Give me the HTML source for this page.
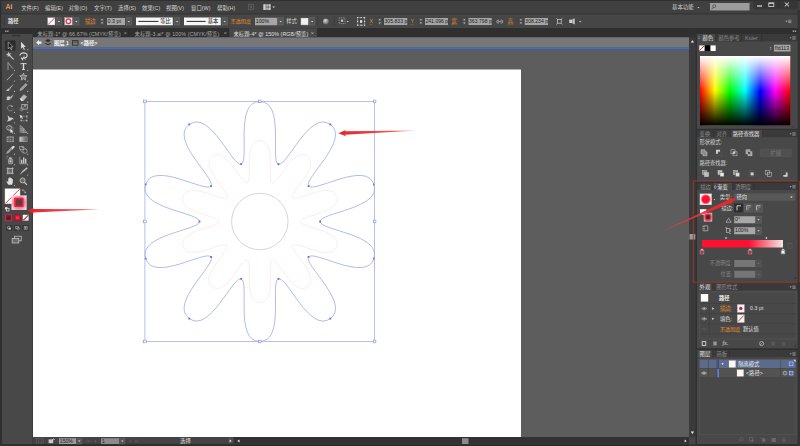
<!DOCTYPE html>
<html lang="zh-CN"><head><meta charset="utf-8"><title>Ai</title>
<style>
html,body{margin:0;padding:0;width:800px;height:446px;overflow:hidden;background:#303030;}
#w{position:absolute;left:0;top:0;width:3200px;height:1784px;transform:scale(0.25);transform-origin:0 0;overflow:hidden;background:#303030;font-family:'Liberation Sans','Noto Sans CJK SC',sans-serif;}
#w div,#w span{position:absolute;box-sizing:border-box;}
#w span{white-space:nowrap;line-height:1;}
#w svg{position:absolute;left:0;top:0;}
u{text-decoration:none;border-bottom:1.6px solid currentColor;}
</style></head><body><div id="w">
<div style="left:0px;top:0px;width:3200px;height:54.4px;background:#404040;"></div>
<div style="left:0px;top:0px;width:3200px;height:2.8px;background:#2b2b2b;"></div>
<div style="left:0px;top:54px;width:3200px;height:4px;background:#383838;"></div>
<div style="left:0px;top:57.6px;width:3200px;height:54.4px;background:#464646;"></div>
<div style="left:0px;top:0px;width:4.8px;height:112px;background:#2e2e2e;"></div>
<div style="left:132px;top:112px;width:2624px;height:36.8px;background:#2f2f2f;"></div>
<div style="left:132px;top:148.8px;width:2624px;height:42px;background:#777777;"></div>
<div style="left:132px;top:190.4px;width:2624px;height:8.8px;background:#4a6cb8;"></div>
<div style="left:132px;top:199.2px;width:2624px;height:1548.8px;background:#5d5d5d;"></div>
<div style="left:132px;top:277.6px;width:1952px;height:1470.4px;background:#ffffff;"></div>
<div style="left:132px;top:1748px;width:2624px;height:36px;background:#323232;"></div>
<div style="left:132px;top:1748px;width:777.6px;height:28px;background:#444444;"></div>
<div style="left:909.6px;top:1748px;width:25.6px;height:28px;background:#4c4c4c;"></div>
<div style="left:132px;top:1774.4px;width:2624px;height:9.6px;background:linear-gradient(#3a3a3a,#262626);"></div>
<div style="left:1848px;top:1753.2px;width:26.4px;height:22.4px;background:#8c8c8c;"></div>
<div style="left:2756px;top:148.8px;width:26.4px;height:1600px;background:#3a3a3a;"></div>
<div style="left:2756px;top:1748px;width:26.4px;height:30px;background:#464646;"></div>
<div style="left:2758.4px;top:936px;width:22.4px;height:22.4px;background:#9a9a9a;"></div>
<div style="left:8px;top:114.4px;width:121.6px;height:21.6px;background:#2f2f2f;"></div>
<div style="left:8px;top:136px;width:121.6px;height:1640px;background:#484848;"></div>
<div style="left:48px;top:140.8px;width:34px;height:4.4px;background:#2a2a2a;"></div>
<div style="left:2788px;top:114.4px;width:412px;height:21.6px;background:#2f2f2f;"></div>
<div style="left:2788px;top:136px;width:412px;height:379.2px;background:#484848;"></div>
<div style="left:2788px;top:136px;width:412px;height:30.4px;background:#3a3a3a;"></div>
<div style="left:2788px;top:136px;width:74.4px;height:31.2px;background:#484848;"></div>
<div style="left:2788px;top:520px;width:412px;height:206.4px;background:#484848;"></div>
<div style="left:2788px;top:520px;width:412px;height:28.8px;background:#3a3a3a;"></div>
<div style="left:2924px;top:520px;width:126px;height:29.6px;background:#484848;"></div>
<div style="left:2788px;top:732px;width:412px;height:396px;background:#484848;"></div>
<div style="left:2788px;top:732px;width:412px;height:28px;background:#3a3a3a;"></div>
<div style="left:2852px;top:732px;width:78px;height:28.8px;background:#484848;"></div>
<div style="left:2788px;top:1133.6px;width:412px;height:259.2px;background:#484848;"></div>
<div style="left:2788px;top:1133.6px;width:412px;height:28px;background:#3a3a3a;"></div>
<div style="left:2788px;top:1133.6px;width:62px;height:28.8px;background:#484848;"></div>
<div style="left:2788px;top:1400px;width:412px;height:376px;background:#484848;"></div>
<div style="left:2788px;top:1400px;width:412px;height:28.8px;background:#3a3a3a;"></div>
<div style="left:2788px;top:1400px;width:62px;height:29.6px;background:#484848;"></div>
<span style="left:22.4px;top:9.6px;font-size:32.4px;color:#d6d6d6;transform:scaleX(0.86);transform-origin:0 0;"><b style="color:#dc8f58">A</b><b style="color:#c9b3a1">i</b></span>
<span style="left:84.8px;top:19.6px;font-size:21.6px;color:#d4d4d4;">文件(F)</span>
<span style="left:180px;top:19.6px;font-size:21.6px;color:#d4d4d4;">编辑(E)</span>
<span style="left:274.4px;top:19.6px;font-size:21.6px;color:#d4d4d4;">对象(O)</span>
<span style="left:376px;top:19.6px;font-size:21.6px;color:#d4d4d4;">文字(T)</span>
<span style="left:472px;top:19.6px;font-size:21.6px;color:#d4d4d4;">选择(S)</span>
<span style="left:568px;top:19.6px;font-size:21.6px;color:#d4d4d4;">效果(C)</span>
<span style="left:664px;top:19.6px;font-size:21.6px;color:#d4d4d4;">视图(V)</span>
<span style="left:764px;top:19.6px;font-size:21.6px;color:#d4d4d4;">窗口(W)</span>
<span style="left:868px;top:19.6px;font-size:21.6px;color:#d4d4d4;">帮助(H)</span>
<span style="left:2688px;top:17.6px;font-size:21.6px;color:#cfcfcf;">基本功能</span>
<div style="left:2840px;top:12px;width:158px;height:30.4px;background:#9c9c9c;border-radius:1px;"></div>
<div style="left:3012px;top:2.8px;width:180px;height:34.4px;background:#363636;border-radius:0 0 8px 8px;"></div>
<span style="left:31.6px;top:74.4px;font-size:21.2px;color:#e2e2e2;"><b>路径</b></span>
<span style="left:340px;top:74px;font-size:21.2px;color:#e08a2c;"><u>描边</u></span>
<div style="left:427.6px;top:71.6px;width:72.8px;height:28.8px;background:#a6a6a6;"></div>
<span style="left:430.4px;top:75.6px;font-size:20.8px;color:#1c1c1c;letter-spacing:0.3px;">0.3 pt</span>
<div style="left:544px;top:70.4px;width:147.2px;height:30.4px;background:#f6f6f6;"></div>
<span style="left:640.8px;top:75.2px;font-size:21.2px;color:#111;">等比</span>
<div style="left:736.4px;top:70.4px;width:146.4px;height:30.4px;background:#f6f6f6;"></div>
<span style="left:831.2px;top:75.2px;font-size:21.2px;color:#111;">基本</span>
<span style="left:922.4px;top:74px;font-size:20.4px;color:#e08a2c;"><u>不透明度</u></span>
<div style="left:1020px;top:71.2px;width:88.8px;height:29.6px;background:#a6a6a6;"></div>
<span style="left:1023.2px;top:76px;font-size:20.8px;color:#1c1c1c;">100%</span>
<span style="left:1144.8px;top:74.4px;font-size:21.2px;color:#dadada;">样式:</span>
<span style="left:1477.6px;top:74.8px;font-size:20.8px;color:#e08a2c;"><u>X</u></span>
<div style="left:1536px;top:71.6px;width:92.8px;height:28.8px;background:#a6a6a6;"></div>
<span style="left:1538px;top:76px;font-size:20px;color:#1c1c1c;letter-spacing:0.25px;">305.833 p</span>
<span style="left:1642.4px;top:74.8px;font-size:20.8px;color:#e08a2c;"><u>Y</u></span>
<div style="left:1699.6px;top:71.6px;width:92.8px;height:28.8px;background:#a6a6a6;"></div>
<span style="left:1701.6px;top:76px;font-size:20px;color:#1c1c1c;letter-spacing:0.25px;">241.096 p</span>
<span style="left:1804.8px;top:73.6px;font-size:22.4px;color:#e08a2c;"><u>宽</u></span>
<div style="left:1874px;top:71.6px;width:92.8px;height:28.8px;background:#a6a6a6;"></div>
<span style="left:1876px;top:76px;font-size:20px;color:#1c1c1c;letter-spacing:0.25px;">363.798 p</span>
<span style="left:2030.4px;top:73.6px;font-size:22.4px;color:#e08a2c;"><u>高</u></span>
<div style="left:2099.2px;top:71.6px;width:92.8px;height:28.8px;background:#a6a6a6;"></div>
<span style="left:2101.2px;top:76px;font-size:20px;color:#1c1c1c;letter-spacing:0.25px;">308.234 p</span>
<div style="left:916px;top:112.8px;width:352px;height:36px;background:#484848;"></div>
<span style="left:149.2px;top:124.8px;font-size:21.2px;color:#a8a8a8;letter-spacing:0.34px;">未标题-1* @ 66.67% (CMYK/预览)</span>
<span style="left:538.4px;top:124.8px;font-size:21.2px;color:#a8a8a8;letter-spacing:0.34px;">未标题-3.ai* @ 100% (CMYK/预览)</span>
<span style="left:933.6px;top:124.8px;font-size:21.2px;color:#e0e0e0;letter-spacing:0.34px;">未标题-4* @ 150% (RGB/预览)</span>
<span style="left:216px;top:159.6px;font-size:21.2px;color:#f4f4f4;"><b>图层 1</b></span>
<span style="left:322.4px;top:159.6px;font-size:21.2px;color:#f4f4f4;"><b>&lt;路径&gt;</b></span>
<div style="left:236px;top:1752.8px;width:68px;height:23.2px;background:#9a9a9a;"></div>
<span style="left:239.2px;top:1754.4px;font-size:20.4px;color:#1c1c1c;">150%</span>
<div style="left:404px;top:1752.8px;width:72px;height:23.2px;background:#8c8c8c;"></div>
<span style="left:408px;top:1754.4px;font-size:20.4px;color:#2a2a2a;">1</span>
<span style="left:720px;top:1753.2px;font-size:21.6px;color:#e0e0e0;">选择</span>
<span style="left:2810.4px;top:140.8px;font-size:21.2px;color:#e4e4e4;">颜色</span>
<span style="left:2873.6px;top:140.8px;font-size:21.2px;color:#8e8e8e;">颜色参考</span>
<span style="left:2980px;top:140.8px;font-size:21.2px;color:#8e8e8e;letter-spacing:0.5px;">Kuler</span>
<div style="left:3096px;top:179.2px;width:65.6px;height:26.4px;background:#a8a8a8;"></div>
<span style="left:3099.2px;top:182.4px;font-size:20.8px;color:#222;letter-spacing:0.2px;">ffd113</span>
<div style="left:2800px;top:223.6px;width:360.8px;height:278.4px;background:linear-gradient(to bottom,rgba(255,255,255,1) 0%,rgba(255,255,255,0) 50%,rgba(0,0,0,0) 50%,rgba(0,0,0,1) 100%),linear-gradient(to right,#ff0000 0%,#ffff00 16.7%,#00ff00 33.3%,#00ffff 50%,#0000ff 66.7%,#ff00ff 83.3%,#ff0000 100%);"></div>
<div style="left:2800px;top:499.6px;width:360.8px;height:2.8px;background:#000;"></div>
<span style="left:2798.4px;top:525.2px;font-size:21.2px;color:#8e8e8e;">变换</span>
<span style="left:2865.6px;top:525.2px;font-size:21.2px;color:#8e8e8e;">对齐</span>
<span style="left:2931.2px;top:525.2px;font-size:21.2px;color:#e4e4e4;">路径查找器</span>
<span style="left:2797.6px;top:559.2px;font-size:21.2px;color:#d8d8d8;">形状模式:</span>
<div style="left:3040.8px;top:596px;width:124.8px;height:31.2px;background:#505050;border:2.0px solid #5c5c5c;border-radius:3.2px;"></div>
<span style="left:3081.6px;top:600.8px;font-size:21.2px;color:#7e7e7e;">扩展</span>
<span style="left:2797.6px;top:641.6px;font-size:21.2px;color:#d8d8d8;">路径查找器:</span>
<span style="left:2800.8px;top:736.8px;font-size:21.2px;color:#8e8e8e;">描边</span>
<span style="left:2868.8px;top:736.8px;font-size:21.2px;color:#e4e4e4;">渐变</span>
<span style="left:2940.8px;top:736.8px;font-size:21.2px;color:#8e8e8e;">透明度</span>
<span style="left:2879.2px;top:778.4px;font-size:21.2px;color:#d8d8d8;">类型:</span>
<div style="left:2936.8px;top:774.8px;width:242.4px;height:26px;background:#585858;border:1.6px solid #6a6a6a;"></div>
<span style="left:2945.6px;top:778px;font-size:21.2px;color:#e8e8e8;">径向</span>
<span style="left:2884.8px;top:822.4px;font-size:21.2px;color:#d8d8d8;">描边:</span>
<div style="left:2936.8px;top:864.8px;width:84px;height:28px;background:#a8a8a8;"></div>
<span style="left:2940px;top:868px;font-size:20.8px;color:#222;">0°</span>
<div style="left:2936.8px;top:908.8px;width:84px;height:28px;background:#a8a8a8;"></div>
<span style="left:2940px;top:912px;font-size:20.8px;color:#222;">100%</span>
<div style="left:2808px;top:960px;width:324px;height:30.4px;background:linear-gradient(to right,#ff1030 0%,#ff1030 58%,#f6d6da 97%,#f0e4e6 100%);"></div>
<span style="left:2838.4px;top:1043.2px;font-size:21.2px;color:#858585;">不透明度:</span>
<div style="left:2936.8px;top:1040px;width:84px;height:28px;background:#767676;"></div>
<span style="left:2881.6px;top:1086.4px;font-size:21.2px;color:#858585;">位置:</span>
<div style="left:2936.8px;top:1083.2px;width:84px;height:28px;background:#767676;"></div>
<span style="left:2798.4px;top:1138.4px;font-size:21.2px;color:#e4e4e4;">外观</span>
<span style="left:2864.8px;top:1138.4px;font-size:21.2px;color:#8e8e8e;">图形样式</span>
<span style="left:2876px;top:1181.6px;font-size:21.2px;color:#f0f0f0;"><b>路径</b></span>
<span style="left:2880px;top:1223.2px;font-size:21.2px;color:#e08a2c;"><u>描边:</u></span>
<span style="left:3000px;top:1224px;font-size:20.4px;color:#e0e0e0;letter-spacing:0.55px;">0.3 pt</span>
<span style="left:2880px;top:1264px;font-size:21.2px;color:#e4e4e4;">填色:</span>
<span style="left:2880px;top:1304.8px;font-size:20.4px;color:#e08a2c;"><u>不透明度</u></span>
<span style="left:2972px;top:1304.8px;font-size:21.2px;color:#e4e4e4;">默认值</span>
<span style="left:2890.4px;top:1360.8px;font-size:22.4px;color:#e0e0e0;font-family:'Liberation Serif',serif;"><i>fx</i>.</span>
<span style="left:2798.4px;top:1405.6px;font-size:21.2px;color:#e4e4e4;">图层</span>
<span style="left:2865.6px;top:1405.6px;font-size:21.2px;color:#8e8e8e;">画板</span>
<div style="left:2798.4px;top:1438.4px;width:384.8px;height:35.2px;background:#5c6b8c;"></div>
<div style="left:2798.4px;top:1474.4px;width:384.8px;height:36px;background:#535353;"></div>
<span style="left:2952.8px;top:1444px;font-size:21.2px;color:#f0f0f0;">隔离模式</span>
<span style="left:2984px;top:1480.4px;font-size:21.2px;color:#e8e8e8;">&lt;路径&gt;</span>
<svg width="3200" height="1784" viewBox="0 0 800 446">
<rect x="248.7" y="4.2" width="4.8" height="5.6" fill="#444" stroke="#6a6a6a" stroke-width="0.6" />
<path d="M250.4 5.6l1.8 1.4l-1.8 1.4z" fill="#6a6a6a" />
<rect x="263.3" y="4.2" width="7.4" height="5.8" fill="#cfcfcf" />
<path d="M266 4.2v5.8M268.1 4.2v5.8M266 7.1h4.7" fill="none" stroke="#404040" stroke-width="0.6" />
<path d="M272.4 6.45h2.6l-1.3 1.5z" fill="#d8d8d8" />
<path d="M697.4 6.95h2.2l-1.1 1.3z" fill="#cfcfcf" />
<circle cx="714.2" cy="6.2" r="1.5" fill="none" stroke="#3c3c3c" stroke-width="0.6" />
<path d="M713.1 7.4l-1.4 1.8" fill="none" stroke="#3c3c3c" stroke-width="0.7" />
<path d="M765.2 1v8M779 1v8" fill="none" stroke="#2a2a2a" stroke-width="0.5" />
<rect x="757" y="5.4" width="5" height="1.2" fill="#dcdcdc" />
<rect x="768.8" y="3" width="5" height="3.4" fill="none" stroke="#dcdcdc" stroke-width="0.8" />
<path d="M768.8 3.2h5" fill="none" stroke="#dcdcdc" stroke-width="1" />
<path d="M784.8 2.5l4.2 3.9M789 2.5l-4.2 3.9" fill="none" stroke="#e0e0e0" stroke-width="1" />
<path d="M4.2 16.6v9" fill="none" stroke="#2a2a2a" stroke-width="0.9" stroke-dasharray="0.9 0.5"/>
<rect x="47.6" y="17.6" width="7.4" height="7.4" fill="#ffffff" stroke="#888" stroke-width="0.4" />
<path d="M48 24.6l6.6-6.6" fill="none" stroke="#e02020" stroke-width="0.9" />
<rect x="56.2" y="17.8" width="5.4" height="7.2" fill="#555555" stroke="#6e6e6e" stroke-width="0.5" />
<path d="M57.7 20.9h2.4l-1.2 1.4z" fill="#e4e4e4" />
<rect x="64.6" y="17.6" width="7.6" height="7.4" fill="#f2e6e8" stroke="#999" stroke-width="0.4" />
<circle cx="68.4" cy="21.3" r="2.3" fill="none" stroke="#e03858" stroke-width="1.3" />
<rect x="67.5" y="20.4" width="1.8" height="1.8" fill="#ffffff" />
<rect x="73.6" y="17.8" width="5.4" height="7.2" fill="#555555" stroke="#6e6e6e" stroke-width="0.5" />
<path d="M75.1 20.9h2.4l-1.2 1.4z" fill="#e4e4e4" />
<rect x="99.6" y="17.8" width="5" height="7.2" fill="#505050" stroke="#3a3a3a" stroke-width="0.4" />
<path d="M101 20.35h2.2l-1.1 -1.3z" fill="#dcdcdc" />
<path d="M101 22.45h2.2l-1.1 1.3z" fill="#dcdcdc" />
<path d="M99.6 21.400000000000002h5" fill="none" stroke="#3a3a3a" stroke-width="0.4" />
<rect x="126.2" y="17.8" width="5.4" height="7.2" fill="#555555" stroke="#6e6e6e" stroke-width="0.5" />
<path d="M127.7 20.9h2.4l-1.2 1.4z" fill="#e4e4e4" />
<path d="M138.4 21.4h20" fill="none" stroke="#111" stroke-width="0.9" />
<rect x="174.4" y="17.8" width="5.4" height="7.2" fill="#555555" stroke="#6e6e6e" stroke-width="0.5" />
<path d="M175.9 20.9h2.4l-1.2 1.4z" fill="#e4e4e4" />
<path d="M186.6 21.4h19" fill="none" stroke="#111" stroke-width="0.9" />
<rect x="222" y="17.8" width="5.4" height="7.2" fill="#555555" stroke="#6e6e6e" stroke-width="0.5" />
<path d="M223.5 20.9h2.4l-1.2 1.4z" fill="#e4e4e4" />
<rect x="278" y="17.8" width="5.4" height="7.2" fill="#555555" stroke="#6e6e6e" stroke-width="0.5" />
<path d="M279.5 20.9h2.4l-1.2 1.4z" fill="#e4e4e4" />
<rect x="300.9" y="18" width="7.3" height="7" fill="#f0f0f0" stroke="#8a8a8a" stroke-width="0.4" />
<rect x="309.4" y="17.8" width="5.4" height="7.2" fill="#555555" stroke="#6e6e6e" stroke-width="0.5" />
<path d="M310.9 20.9h2.4l-1.2 1.4z" fill="#e4e4e4" />
<path d="M317.6 16v10M334.4 16v10" fill="none" stroke="#383838" stroke-width="0.6" />
<defs><radialGradient id="gl" cx="0.4" cy="0.35" r="0.7"><stop offset="0" stop-color="#d8d8d8"/><stop offset="0.6" stop-color="#8c8c8c"/><stop offset="1" stop-color="#555"/></radialGradient></defs>
<circle cx="325.9" cy="21.5" r="3" fill="url(#gl)" />
<rect x="339.2" y="17.8" width="5.8" height="5.8" fill="none" stroke="#c8c8c8" stroke-width="0.6" stroke-dasharray="1 0.8"/>
<rect x="341" y="19.6" width="2.2" height="2.2" fill="#c8c8c8" />
<path d="M346.5 20.9h2.4l-1.2 1.4z" fill="#d8d8d8" />
<rect x="357.6" y="17.6" width="7" height="7.6" fill="none" stroke="#cfcfcf" stroke-width="0.7" stroke-dasharray="1.1 0.7"/>
<rect x="360" y="20.2" width="2.2" height="2.6" fill="#e8e8e8" />
<rect x="357" y="17" width="1.2" height="1.2" fill="#d8d8d8" />
<rect x="357" y="20.8" width="1.2" height="1.2" fill="#d8d8d8" />
<rect x="357" y="24.6" width="1.2" height="1.2" fill="#d8d8d8" />
<rect x="360.5" y="17" width="1.2" height="1.2" fill="#d8d8d8" />
<rect x="360.5" y="20.8" width="1.2" height="1.2" fill="#d8d8d8" />
<rect x="360.5" y="24.6" width="1.2" height="1.2" fill="#d8d8d8" />
<rect x="364" y="17" width="1.2" height="1.2" fill="#d8d8d8" />
<rect x="364" y="20.8" width="1.2" height="1.2" fill="#d8d8d8" />
<rect x="364" y="24.6" width="1.2" height="1.2" fill="#d8d8d8" />
<rect x="377.2" y="17.8" width="5" height="7.2" fill="#505050" stroke="#3a3a3a" stroke-width="0.4" />
<path d="M378.6 20.35h2.2l-1.1 -1.3z" fill="#dcdcdc" />
<path d="M378.6 22.45h2.2l-1.1 1.3z" fill="#dcdcdc" />
<path d="M377.2 21.400000000000002h5" fill="none" stroke="#3a3a3a" stroke-width="0.4" />
<rect x="418.4" y="17.8" width="5" height="7.2" fill="#505050" stroke="#3a3a3a" stroke-width="0.4" />
<path d="M419.8 20.35h2.2l-1.1 -1.3z" fill="#dcdcdc" />
<path d="M419.8 22.45h2.2l-1.1 1.3z" fill="#dcdcdc" />
<path d="M418.4 21.400000000000002h5" fill="none" stroke="#3a3a3a" stroke-width="0.4" />
<rect x="461.8" y="17.8" width="5" height="7.2" fill="#505050" stroke="#3a3a3a" stroke-width="0.4" />
<path d="M463.2 20.35h2.2l-1.1 -1.3z" fill="#dcdcdc" />
<path d="M463.2 22.45h2.2l-1.1 1.3z" fill="#dcdcdc" />
<path d="M461.8 21.400000000000002h5" fill="none" stroke="#3a3a3a" stroke-width="0.4" />
<path d="M498.2 21.6h3.2" fill="none" stroke="#cfcfcf" stroke-width="0.7" />
<path d="M499 20.2h-0.8a1.4 1.4 0 0 0 0 2.8h0.8M500.6 20.2h0.8a1.4 1.4 0 0 1 0 2.8h-0.8" fill="none" stroke="#cfcfcf" stroke-width="0.7" />
<rect x="518.4" y="17.8" width="5" height="7.2" fill="#505050" stroke="#3a3a3a" stroke-width="0.4" />
<path d="M519.8 20.35h2.2l-1.1 -1.3z" fill="#dcdcdc" />
<path d="M519.8 22.45h2.2l-1.1 1.3z" fill="#dcdcdc" />
<path d="M518.4 21.400000000000002h5" fill="none" stroke="#3a3a3a" stroke-width="0.4" />
<rect x="557.6" y="19.4" width="3.6" height="3.8" fill="none" stroke="#d0d0d0" stroke-width="0.7" />
<path d="M556.3 18.3l1.3 1.1M562.5 18.3l-1.3 1.1M556.3 24.4l1.3-1.2M562.5 24.4l-1.3-1.2" fill="none" stroke="#d0d0d0" stroke-width="0.7" />
<rect x="569.2" y="19.6" width="3.2" height="3.4" fill="#cfcfcf" />
<path d="M572.4 19.2l2.4-1v6.4l-2.4-1z" fill="#bdbdbd" />
<path d="M579 20.9h2.4l-1.2 1.4z" fill="#d8d8d8" />
<path d="M785.3 20.75h2.2l-1.1 1.3z" fill="#cfcfcf" />
<path d="M788.2 20.2h3.2M788.2 21.4h3.2M788.2 22.6h3.2" fill="none" stroke="#cfcfcf" stroke-width="0.5" />
<path d="M124.4 32.2l2 2M126.4 32.2l-2 2" fill="none" stroke="#b0b0b0" stroke-width="0.6" />
<path d="M224.4 32.2l2 2M226.4 32.2l-2 2" fill="none" stroke="#b0b0b0" stroke-width="0.6" />
<path d="M311.4 32.2l2 2M313.4 32.2l-2 2" fill="none" stroke="#c8c8c8" stroke-width="0.6" />
<path d="M128.8 29v8M228.8 29v8" fill="none" stroke="#262626" stroke-width="0.5" />
<path d="M36.2 42.6l2.8-2.6v1.5h2.4v2.2h-2.4v1.5z" fill="#f2f2f2" />
<path d="M45.2 40.6l2.8-1.6l2.8 1.6l-2.8 1.6z" fill="#2c2c2c" />
<path d="M45.2 43.2l2.8 1.6l2.8-1.6" fill="none" stroke="#2c2c2c" stroke-width="1" />
<path d="M54 45.8h14" fill="none" stroke="#e8e8e8" stroke-width="0.4" />
<rect x="72.4" y="40.6" width="5.6" height="4.6" fill="none" stroke="#2e2e2e" stroke-width="0.8" />
<path d="M72.4 42h5.6" fill="none" stroke="#2e2e2e" stroke-width="0.6" />
<rect x="36.4" y="438.6" width="7" height="4.4" fill="none" stroke="#5e5e5e" stroke-width="0.6" />
<path d="M38.6 438.6v4.4M41.2 438.6v4.4" fill="none" stroke="#5e5e5e" stroke-width="0.5" />
<rect x="48.6" y="439.4" width="4.6" height="3.8" fill="#c8c8c8" />
<path d="M51 440.8l2.6-2.2v1h1.4" fill="none" stroke="#c8c8c8" stroke-width="0.7" />
<rect x="76.6" y="438.2" width="5.4" height="5.8" fill="#555" stroke="#6a6a6a" stroke-width="0.4" />
<path d="M78.1 440.6h2.4l-1.2 1.4z" fill="#dcdcdc" />
<path d="M87 439.4v3.6" fill="none" stroke="#5e5e5e" stroke-width="0.6" />
<path d="M89.5 439.7v3l-1.8 -1.5z" fill="#5e5e5e" />
<path d="M96.1 439.7v3l-1.8 -1.5z" fill="#5e5e5e" />
<rect x="119.6" y="438.2" width="5.4" height="5.8" fill="#555" stroke="#6a6a6a" stroke-width="0.4" />
<path d="M121.1 440.6h2.4l-1.2 1.4z" fill="#dcdcdc" />
<path d="M129.7 439.7v3l1.8 -1.5z" fill="#5e5e5e" />
<path d="M135.5 439.7v3l1.8 -1.5z" fill="#5e5e5e" />
<path d="M138 439.4v3.6" fill="none" stroke="#5e5e5e" stroke-width="0.6" />
<path d="M229.6 439.4v3l2 -1.5z" fill="#e8e8e8" />
<path d="M239.5 439.4v3l-2.2 -1.5z" fill="#e8e8e8" />
<path d="M6.3 30.1v2.2l-1.4 -1.1z" fill="#c8c8c8" />
<path d="M8.3 30.1v2.2l-1.4 -1.1z" fill="#c8c8c8" />
<rect x="5.2" y="40.8" width="10" height="9.6" fill="#2c2c2c" stroke="#262626" stroke-width="0.4" rx="0.6"/>
<path d="M8.2 41.8v7l1.7-1.5l1.2 2.6l1-0.5l-1.2-2.5h2.2z" fill="#1a1a1a" stroke="#c8c8c8" stroke-width="0.6" />
<path d="M21.0 41.8v7l1.7-1.5l1.2 2.6l1-0.5l-1.2-2.5h2.2z" fill="#d8d8d8" />
<path d="M28.2 48.8v1.4h-1.4z" fill="#c8c8c8" />
<path d="M9.399999999999999 55.24999999999999l4.2 4.2" fill="none" stroke="#c6c6c6" stroke-width="1.1" />
<path d="M8.6 51.64999999999999l0.7 1.9l2-0.4l-1.4 1.5l1.2 1.7l-2-0.6l-1.3 1.6l-0.1-2.1l-1.9-0.8l1.9-0.7z" fill="#c6c6c6" />
<path d="M20.0 55.449999999999996a3.6 2.5 0 1 1 3.2 2.4l-0.6 1.8l-1.4-2" fill="none" stroke="#dadada" stroke-width="1.1" />
<path d="M24.0 55.449999999999996v3.6l1-0.8l0.8 1.6" fill="none" stroke="#c6c6c6" stroke-width="0.7" />
<path d="M7.999999999999999 62.5l5 6.2M7.999999999999999 62.5v7.4" fill="none" stroke="#bdbdbd" stroke-width="0.7" />
<path d="M15 69.7v1.4h-1.4z" fill="#c8c8c8" />
<path d="M20.599999999999998 62.9h5.8v1.5h-0.6l-0.3-0.7h-1.3v5.4l0.8 0.3v0.5h-3v-0.5l0.8-0.3v-5.4h-1.3l-0.3 0.7h-0.6z" fill="#dcdcdc" />
<path d="M28.2 69.7v1.4h-1.4z" fill="#c8c8c8" />
<path d="M6.799999999999999 80.15l6.6-6.6" fill="none" stroke="#c6c6c6" stroke-width="0.8" />
<path d="M15 80.15v1.4h-1.4z" fill="#c8c8c8" />
<path d="M23.4 73.05L24.4 75.57L27.11 75.74L25.02 77.48L25.69 80.11L23.4 78.65L21.11 80.11L21.78 77.48L19.69 75.74L22.4 75.57z" fill="#777" stroke="#c6c6c6" stroke-width="0.7" />
<path d="M28.2 80.15v1.4h-1.4z" fill="#c8c8c8" />
<path d="M13.799999999999999 83.39999999999999l-4.6 4.8l0.9 0.9z" fill="#c6c6c6" />
<path d="M8.799999999999999 88.39999999999999c-1.6 0-1.2 2-3 2.4c1.6 0.6 4 0.2 3.9-1.6z" fill="#c6c6c6" />
<path d="M15 90.6v1.4h-1.4z" fill="#c8c8c8" />
<path d="M25.799999999999997 83.39999999999999l1.4 1.4l-5.2 5.2l-2 0.6l0.6-2z" fill="#9a9a9a" stroke="#c6c6c6" stroke-width="0.5" />
<path d="M28.2 90.6v1.4h-1.4z" fill="#c8c8c8" />
<path d="M13.799999999999999 94.25l-3.6 3l1 1.2z" fill="#c6c6c6" />
<path d="M6.6 97.05000000000001c2-1.6 4-0.6 4.2 0.8c0.2 1.6-2 2.8-4.4 2.2c0.8-0.8 0.6-2 0.2-3z" fill="#c6c6c6" />
<path d="M20.0 98.65l3.8-4l3 2l-3.6 4.2h-1.8z" fill="#b8b8b8" stroke="#c6c6c6" stroke-width="0.4" />
<path d="M20.0 98.65l1.4 2.2h1.8l-1.6-2.4z" fill="#eeeeee" />
<path d="M28.2 101.05v1.4h-1.4z" fill="#c8c8c8" />
<path d="M12.6 106.5a2.8 2.8 0 1 0 0.4 2.4" fill="none" stroke="#b4b4b4" stroke-width="0.75" stroke-dasharray="1.3 0.7"/>
<path d="M11.399999999999999 104.89999999999999l1.8 1.5l-2 0.7z" fill="#b4b4b4" />
<path d="M15 111.5v1.4h-1.4z" fill="#c8c8c8" />
<rect x="21.8" y="104.5" width="5.4" height="4.6" fill="none" stroke="#c6c6c6" stroke-width="0.7" />
<rect x="20" y="107.9" width="3" height="2.8" fill="none" stroke="#c6c6c6" stroke-width="0.6" stroke-dasharray="0.8 0.6"/>
<path d="M23.2 107.69999999999999l2-2M23.799999999999997 105.5h1.6v1.6" fill="none" stroke="#c6c6c6" stroke-width="0.6" />
<path d="M28.2 111.5v1.4h-1.4z" fill="#c8c8c8" />
<path d="M6.799999999999999 121.74999999999999l1.6-2.6l-0.8-3.8l2.6 2.4c1.6-0.6 2.8 0.2 3.6 1.6c-1.4-0.4-2.2 0-2.8 1.2c-1.4 0.2-2.8 0.4-4.2 1.2z" fill="#cfcfcf" />
<path d="M15 121.95v1.4h-1.4z" fill="#c8c8c8" />
<rect x="21.2" y="116.15" width="5.6" height="4.6" fill="none" stroke="#c6c6c6" stroke-width="0.6" stroke-dasharray="1 0.6"/>
<path d="M19.599999999999998 114.74999999999999l3.2 1.6l-1 0.4l1.2 1.4l-0.6 0.5l-1.2-1.4l-0.6 0.9z" fill="#e6e6e6" />
<rect x="26.2" y="115.55" width="1.2" height="1.2" fill="#c6c6c6" />
<rect x="26.2" y="120.15" width="1.2" height="1.2" fill="#c6c6c6" />
<rect x="20.6" y="120.15" width="1.2" height="1.2" fill="#c6c6c6" />
<circle cx="9" cy="127.8" r="2.4" fill="none" stroke="#c6c6c6" stroke-width="0.7" />
<circle cx="10.8" cy="128.6" r="2.4" fill="none" stroke="#c6c6c6" stroke-width="0.7" stroke-dasharray="0.9 0.6"/>
<path d="M10.399999999999999 129.0v4l1-0.9l0.8 1.5l0.7-0.3l-0.8-1.5h1.4z" fill="#f0f0f0" />
<path d="M15 132.4v1.4h-1.4z" fill="#c8c8c8" />
<path d="M20.2 125.4v6.8l6.8 0.6M20.2 125.4l3.4 2.8v4.4M20.2 128.0l3.4 1.4M20.2 130.2l3.4 0.4M22.0 126.8v5.6M23.599999999999998 128.2l3.4 4.6M23.599999999999998 130.0l2 2.6" fill="none" stroke="#c6c6c6" stroke-width="0.55" />
<path d="M28.2 132.4v1.4h-1.4z" fill="#c8c8c8" />
<rect x="7" y="136.85" width="6.6" height="5" fill="#8a8a8a" stroke="#b8b8b8" stroke-width="0.5" />
<path d="M6.999999999999999 138.54999999999998c2 0.7 4.4-0.7 6.6 0M6.999999999999999 140.25c2 0.7 4.4-0.7 6.6 0M9.1 136.85c0.7 1.8-0.5 3.2 0 5M11.399999999999999 136.85c0.7 1.8-0.5 3.2 0 5" fill="none" stroke="#484848" stroke-width="0.6" />
<defs><linearGradient id="tg" x1="0" x2="1"><stop offset="0" stop-color="#d0d0d0"/><stop offset="1" stop-color="#505050"/></linearGradient></defs>
<rect x="19.7" y="136.95" width="7.4" height="4.8" fill="url(#tg)" stroke="#a8a8a8" stroke-width="0.6" />
<path d="M6.6 153.5l0.6-1.8l3.6-3.6l1.2 1.2l-3.6 3.6z" fill="#9a9a9a" stroke="#c6c6c6" stroke-width="0.4" />
<path d="M10.6 147.5l1-0.2l1.2-1.2a1 1 0 0 1 1.5 1.5l-1.2 1.2l-0.2 1z" fill="#e0e0e0" />
<path d="M15 153.3v1.4h-1.4z" fill="#c8c8c8" />
<rect x="19.8" y="146.5" width="3.4" height="3" fill="none" stroke="#c6c6c6" stroke-width="0.6" />
<circle cx="25" cy="151.1" r="2.2" fill="none" stroke="#c6c6c6" stroke-width="0.6" />
<path d="M21.599999999999998 147.5c2-0.4 4 0.6 4.6 2M20.4 149.5c0.4 2 1.6 3.4 3 3.6" fill="none" stroke="#c6c6c6" stroke-width="0.5" />
<path d="M28.2 153.3v1.4h-1.4z" fill="#c8c8c8" />
<rect x="8.4" y="158.95" width="4.2" height="4.8" fill="#7a7a7a" stroke="#c6c6c6" stroke-width="0.6" rx="0.8"/>
<rect x="9.2" y="157.35" width="2.4" height="1.6" fill="#c6c6c6" />
<circle cx="10.5" cy="161.35" r="1" fill="#c6c6c6" />
<path d="M6.6 156.75h1M6.3999999999999995 158.15h0.8M7.6 156.15h0.8" fill="none" stroke="#c6c6c6" stroke-width="0.6" />
<path d="M15 163.75v1.4h-1.4z" fill="#c8c8c8" />
<path d="M19.799999999999997 156.75v7h7.4" fill="none" stroke="#c6c6c6" stroke-width="0.6" />
<rect x="21" y="159.75" width="1.4" height="3.6" fill="#c6c6c6" />
<rect x="23" y="157.35" width="1.4" height="6" fill="#c6c6c6" />
<rect x="25" y="158.75" width="1.4" height="4.6" fill="#c6c6c6" />
<path d="M28.2 163.75v1.4h-1.4z" fill="#c8c8c8" />
<rect x="7.8" y="168.4" width="4.8" height="4.8" fill="#6a6a6a" stroke="#c6c6c6" stroke-width="0.6" />
<path d="M6.3999999999999995 168.39999999999998h7.6M6.3999999999999995 173.2h7.6M7.799999999999999 166.99999999999997v7.6M12.6 166.99999999999997v7.6" fill="none" stroke="#c6c6c6" stroke-width="0.5" />
<path d="M26.799999999999997 167.2l-4.4 3.8l-1.8 2.6l2.8-1.6l4.4-3.8z" fill="#c6c6c6" />
<path d="M20.0 174.2l1.8-1" fill="none" stroke="#c6c6c6" stroke-width="0.6" />
<path d="M28.2 174.2v1.4h-1.4z" fill="#c8c8c8" />
<path d="M8.399999999999999 184.85c-0.6-1.4-1.8-2.4-2-3.4c0.6-0.4 1.2 0 1.8 0.8v-3.6c0.4-0.5 0.9-0.5 1.1 0v-1c0.4-0.5 0.9-0.5 1.2 0v0.6c0.4-0.5 0.9-0.4 1.2 0.1v0.8c0.4-0.4 0.9-0.3 1.1 0.2c0.1 2.2 0.2 4-0.8 5.5z" fill="#dedede" />
<path d="M15 184.65v1.4h-1.4z" fill="#c8c8c8" />
<circle cx="22.6" cy="180.45" r="2.5" fill="#6a6a6a" stroke="#c6c6c6" stroke-width="0.8" />
<path d="M24.4 182.25l2.6 2.6" fill="none" stroke="#c6c6c6" stroke-width="1.2" />
<rect x="5" y="188.8" width="15" height="15" fill="#ffffff" stroke="#d8d8d8" stroke-width="0.4" />
<path d="M5.4 203.4l14.2-14.2" fill="none" stroke="#e02828" stroke-width="0.9" />
<path d="M22.6 190.2c1.6 0 2.6 0.8 2.6 2.6" fill="none" stroke="#c6c6c6" stroke-width="0.6" />
<path d="M23.2 189.2l-1.2 1l1.2 1zM24.2 192.2l1 1.2l1-1.2z" fill="#c6c6c6" />
<defs><radialGradient id="sg" cx="0.5" cy="0.5" r="0.75"><stop offset="0.5" stop-color="#f08098"/><stop offset="0.75" stop-color="#f8c8d0"/><stop offset="1" stop-color="#ffffff"/></radialGradient></defs>
<rect x="11.8" y="195.7" width="14.6" height="14.1" fill="url(#sg)" stroke="#f0e0e4" stroke-width="0.4" />
<rect x="14.2" y="197.8" width="9.4" height="9.2" fill="#e8203e" rx="0.8"/>
<rect x="16.3" y="199.8" width="5.6" height="5.4" fill="#474747" stroke="#b01830" stroke-width="0.4" />
<rect x="5" y="207" width="2.6" height="2.6" fill="#ffffff" stroke="#222" stroke-width="0.3" />
<rect x="6.4" y="208.4" width="2.6" height="2.6" fill="#484848" stroke="#e8e8e8" stroke-width="0.7" />
<rect x="5.4" y="214.8" width="6.2" height="6" fill="#7c1628" stroke="#c04058" stroke-width="0.7" />
<rect x="7" y="216.4" width="3" height="2.8" fill="#6a1020" stroke="#9a2038" stroke-width="0.3" />
<rect x="14.4" y="214.8" width="6.2" height="6" fill="#e01030" stroke="#8a1020" stroke-width="0.5" />
<rect x="16" y="216.4" width="3" height="2.8" fill="#f03050" />
<rect x="22.8" y="214.8" width="6" height="6" fill="#ffffff" stroke="#777" stroke-width="0.4" />
<path d="M23.2 220.4l5.2-5.2" fill="none" stroke="#e02020" stroke-width="1.2" />
<rect x="6.2" y="225.2" width="5.8" height="5.4" fill="#3a3a3a" stroke="#2c2c2c" stroke-width="0.4" />
<rect x="14.6" y="225.2" width="5.8" height="5.4" fill="#3a3a3a" stroke="#2c2c2c" stroke-width="0.4" />
<rect x="22.8" y="225.2" width="5.8" height="5.4" fill="#3a3a3a" stroke="#2c2c2c" stroke-width="0.4" />
<circle cx="8.6" cy="227.6" r="1.3" fill="none" stroke="#d0d0d0" stroke-width="0.6" />
<rect x="8.8" y="227.8" width="2" height="1.8" fill="#d0d0d0" />
<rect x="15.8" y="226.4" width="2.6" height="2.4" fill="none" stroke="#bcbcbc" stroke-width="0.5" />
<circle cx="18.2" cy="228.6" r="1.3" fill="none" stroke="#bcbcbc" stroke-width="0.5" />
<rect x="24.2" y="226.4" width="3" height="3" fill="none" stroke="#bcbcbc" stroke-width="0.5" />
<circle cx="25.7" cy="227.9" r="0.8" fill="#bcbcbc" />
<rect x="14.6" y="236.2" width="6.6" height="4.6" fill="#484848" stroke="#cfcfcf" stroke-width="0.7" />
<rect x="12.2" y="238.4" width="6.6" height="4.6" fill="#6a6a6a" stroke="#cfcfcf" stroke-width="0.7" />
<path d="M259.8 140.7C277 140.7 266.64 181.03 272.35 182.89C278.05 184.74 293.38 146.02 307.29 156.13C321.21 166.24 289.12 192.78 292.65 197.64C296.17 202.49 331.33 180.17 336.65 196.53C341.96 212.89 300.4 215.5 300.4 221.5C300.4 227.5 341.96 230.11 336.65 246.47C331.33 262.83 296.17 240.51 292.65 245.36C289.12 250.22 321.21 276.76 307.29 286.87C293.38 296.98 278.05 258.26 272.35 260.11C266.64 261.97 277 302.3 259.8 302.3C242.6 302.3 252.96 261.97 247.25 260.11C241.55 258.26 226.22 296.98 212.31 286.87C198.39 276.76 230.48 250.22 226.95 245.36C223.43 240.51 188.27 262.83 182.95 246.47C177.64 230.11 219.2 227.5 219.2 221.5C219.2 215.5 177.64 212.89 182.95 196.53C188.27 180.17 223.43 202.49 226.95 197.64C230.48 192.78 198.39 166.24 212.31 156.13C226.22 146.02 241.55 184.74 247.25 182.89C252.96 181.03 242.6 140.7 259.8 140.7z" fill="none" stroke="#f8d6da" stroke-width="0.5" />
<circle cx="259.8" cy="221.5" r="28.2" fill="none" stroke="#b4a6b4" stroke-width="0.5" />
<path d="M259.8 101.5C285.3 101.5 269.87 161.37 278.43 164.15C286.99 166.93 309.7 109.43 330.33 124.42C350.96 139.41 303.29 178.78 308.58 186.06C313.87 193.34 366.05 160.17 373.93 184.42C381.81 208.67 320.1 212.5 320.1 221.5C320.1 230.5 381.81 234.33 373.93 258.58C366.05 282.83 313.87 249.66 308.58 256.94C303.29 264.22 350.96 303.59 330.33 318.58C309.7 333.57 286.99 276.07 278.43 278.85C269.87 281.63 285.3 341.5 259.8 341.5C234.3 341.5 249.73 281.63 241.17 278.85C232.61 276.07 209.9 333.57 189.27 318.58C168.64 303.59 216.31 264.22 211.02 256.94C205.73 249.66 153.55 282.83 145.67 258.58C137.79 234.33 199.5 230.5 199.5 221.5C199.5 212.5 137.79 208.67 145.67 184.42C153.55 160.17 205.73 193.34 211.02 186.06C216.31 178.78 168.64 139.41 189.27 124.42C209.9 109.43 232.61 166.93 241.17 164.15C249.73 161.37 234.3 101.5 259.8 101.5z" fill="none" stroke="#7f8fd8" stroke-width="0.6" />
<rect x="258.9" y="100.6" width="1.8" height="1.8" fill="#5a72d8" />
<rect x="277.53" y="163.25" width="1.8" height="1.8" fill="#5a72d8" />
<rect x="329.43" y="123.52" width="1.8" height="1.8" fill="#5a72d8" />
<rect x="307.68" y="185.16" width="1.8" height="1.8" fill="#5a72d8" />
<rect x="373.03" y="183.52" width="1.8" height="1.8" fill="#5a72d8" />
<rect x="319.2" y="220.6" width="1.8" height="1.8" fill="#5a72d8" />
<rect x="373.03" y="257.68" width="1.8" height="1.8" fill="#5a72d8" />
<rect x="307.68" y="256.04" width="1.8" height="1.8" fill="#5a72d8" />
<rect x="329.43" y="317.68" width="1.8" height="1.8" fill="#5a72d8" />
<rect x="277.53" y="277.95" width="1.8" height="1.8" fill="#5a72d8" />
<rect x="258.9" y="340.6" width="1.8" height="1.8" fill="#5a72d8" />
<rect x="240.27" y="277.95" width="1.8" height="1.8" fill="#5a72d8" />
<rect x="188.37" y="317.68" width="1.8" height="1.8" fill="#5a72d8" />
<rect x="210.12" y="256.04" width="1.8" height="1.8" fill="#5a72d8" />
<rect x="144.77" y="257.68" width="1.8" height="1.8" fill="#5a72d8" />
<rect x="198.6" y="220.6" width="1.8" height="1.8" fill="#5a72d8" />
<rect x="144.77" y="183.52" width="1.8" height="1.8" fill="#5a72d8" />
<rect x="210.12" y="185.16" width="1.8" height="1.8" fill="#5a72d8" />
<rect x="188.37" y="123.52" width="1.8" height="1.8" fill="#5a72d8" />
<rect x="240.27" y="163.25" width="1.8" height="1.8" fill="#5a72d8" />
<rect x="144.9" y="101.4" width="229.7" height="240.1" fill="none" stroke="#a4b0ea" stroke-width="0.8" />
<rect x="143.6" y="100.1" width="2.6" height="2.6" fill="#ffffff" stroke="#8090d8" stroke-width="0.6" />
<rect x="143.6" y="220.15" width="2.6" height="2.6" fill="#ffffff" stroke="#8090d8" stroke-width="0.6" />
<rect x="143.6" y="340.2" width="2.6" height="2.6" fill="#ffffff" stroke="#8090d8" stroke-width="0.6" />
<rect x="258.45" y="100.1" width="2.6" height="2.6" fill="#ffffff" stroke="#8090d8" stroke-width="0.6" />
<rect x="258.45" y="340.2" width="2.6" height="2.6" fill="#ffffff" stroke="#8090d8" stroke-width="0.6" />
<rect x="373.3" y="100.1" width="2.6" height="2.6" fill="#ffffff" stroke="#8090d8" stroke-width="0.6" />
<rect x="373.3" y="220.15" width="2.6" height="2.6" fill="#ffffff" stroke="#8090d8" stroke-width="0.6" />
<rect x="373.3" y="340.2" width="2.6" height="2.6" fill="#ffffff" stroke="#8090d8" stroke-width="0.6" />
<path d="M792.9 30.1v2.2l1.4 -1.1z" fill="#c8c8c8" />
<path d="M794.9 30.1v2.2l1.4 -1.1z" fill="#c8c8c8" />
<path d="M699 36.6v3.2" fill="none" stroke="#c8c8c8" stroke-width="0.8" stroke-dasharray="0.8 0.8"/>
<path d="M715.6 34v7.6M741.6 34v7.6M761.6 34v7.6" fill="none" stroke="#2e2e2e" stroke-width="0.5" />
<path d="M789.6 37.4h2l-1 1.2z" fill="#c8c8c8" />
<path d="M792.4 36.8h3.2M792.4 38h3.2M792.4 39.2h3.2" fill="none" stroke="#c8c8c8" stroke-width="0.5" />
<rect x="699.2" y="45.4" width="5.4" height="5.6" fill="#ffffff" stroke="#8a8a8a" stroke-width="0.3" />
<path d="M699.5 50.7l4.8-5" fill="none" stroke="#e02020" stroke-width="0.9" />
<rect x="704.9" y="45.4" width="5.4" height="5.6" fill="#000000" />
<rect x="710.5" y="45.4" width="5.2" height="5.6" fill="#ffffff" />
<path d="M769.8 47.7h1.6l-0.8 -1z" fill="#cfcfcf" />
<path d="M769.8 48.7h1.6l-0.8 1z" fill="#cfcfcf" />
<path d="M793.8 125.2l-2.2 2.2h2.2z" fill="#3a3a3a" />
<path d="M713.6 130v7.2M731 130v7.2M762.6 130v7.2" fill="none" stroke="#2e2e2e" stroke-width="0.5" />
<path d="M789.6 133.4h2l-1 1.2z" fill="#c8c8c8" />
<path d="M792.4 132.8h3.2M792.4 134h3.2M792.4 135.2h3.2" fill="none" stroke="#c8c8c8" stroke-width="0.5" />
<path d="M701 149.8h4v2h2v4h-4v-2h-2z" fill="#8a8a8a" stroke="#cfcfcf" stroke-width="0.5" />
<path d="M716 149.8h4v2h-2v2h-2z" fill="#cfcfcf" />
<rect x="718" y="151.8" width="4" height="4" fill="none" stroke="#777" stroke-width="0.4" stroke-dasharray="0.7 0.5"/>
<rect x="731" y="149.8" width="4" height="4" fill="none" stroke="#cfcfcf" stroke-width="0.5" />
<rect x="733" y="151.8" width="4" height="4" fill="none" stroke="#cfcfcf" stroke-width="0.5" />
<rect x="733" y="151.8" width="2" height="2" fill="#cfcfcf" />
<rect x="746" y="149.8" width="4" height="4" fill="#9a9a9a" stroke="#cfcfcf" stroke-width="0.5" />
<rect x="748" y="151.8" width="4" height="4" fill="#9a9a9a" stroke="#cfcfcf" stroke-width="0.5" />
<rect x="748" y="151.8" width="2" height="2" fill="#484848" />
<rect x="702.6" y="170.6" width="4" height="4" fill="#8a8a8a" stroke="#cfcfcf" stroke-width="0.5" />
<rect x="704.6" y="172.6" width="4" height="4" fill="#bdbdbd" stroke="#cfcfcf" stroke-width="0.5" />
<rect x="718" y="170.6" width="4" height="4" fill="#bdbdbd" stroke="#cfcfcf" stroke-width="0.5" />
<rect x="720" y="172.6" width="4" height="4" fill="#eaeaea" stroke="#555" stroke-width="0.4" />
<rect x="733.6" y="170.6" width="4" height="4" fill="#9a9a9a" stroke="#cfcfcf" stroke-width="0.5" />
<rect x="735.6" y="172.6" width="4" height="4" fill="#dcdcdc" stroke="#555" stroke-width="0.4" />
<rect x="749" y="170.6" width="6" height="6" fill="none" stroke="#777" stroke-width="0.4" stroke-dasharray="0.7 0.5"/>
<rect x="750.6" y="172.4" width="3" height="3" fill="#cfcfcf" />
<rect x="765.4" y="170.6" width="4" height="4" fill="none" stroke="#cfcfcf" stroke-width="0.5" />
<rect x="767.4" y="172.6" width="4" height="4" fill="none" stroke="#cfcfcf" stroke-width="0.5" />
<rect x="781.4" y="170.6" width="4.4" height="4.4" fill="none" stroke="#777" stroke-width="0.4" stroke-dasharray="0.7 0.5"/>
<path d="M785.8 172.6h1.8v4.2h-4.2v-1.8h2.4z" fill="#cfcfcf" />
<path d="M715.2 185.4l1.1 1.6l-1.1 1.6l-1.1-1.6z" fill="none" stroke="#d8d8d8" stroke-width="0.5" />
<path d="M713 183v7M732.6 183v7M754 183v7" fill="none" stroke="#2e2e2e" stroke-width="0.5" />
<path d="M789.6 186.2h2l-1 1.2z" fill="#c8c8c8" />
<path d="M792.4 185.60000000000002h3.2M792.4 186.8h3.2M792.4 188.0h3.2" fill="none" stroke="#c8c8c8" stroke-width="0.5" />
<defs><radialGradient id="gp"><stop offset="0" stop-color="#ff1030"/><stop offset="0.62" stop-color="#ff1030"/><stop offset="1" stop-color="#fff0f2"/></radialGradient></defs>
<rect x="699.9" y="193.7" width="11.8" height="11.2" fill="#fdf4f5" stroke="#9a9a9a" stroke-width="0.3" />
<circle cx="705.8" cy="199.3" r="5.5" fill="url(#gp)" />
<path d="M713.5 199.05h1.8l-0.9 1.1z" fill="#cfcfcf" />
<path d="M790.2 196.45h2.4l-1.2 1.5z" fill="#f0f0f0" />
<rect x="734.6" y="204" width="8.2" height="8" fill="#2e2e2e" stroke="#222" stroke-width="0.4" />
<path d="M737.0 210.4v-4.6h4" fill="none" stroke="#e0e0e0" stroke-width="0.9" />
<rect x="744.4" y="204" width="8.2" height="8" fill="#555555" stroke="#6a6a6a" stroke-width="0.4" />
<path d="M746.8 210.4v-4.6h4" fill="none" stroke="#bdbdbd" stroke-width="0.9" />
<path d="M748.4 210.4v-3h2.4" fill="none" stroke="#9a9a9a" stroke-width="0.5" />
<rect x="754.2" y="204" width="8.2" height="8" fill="#555555" stroke="#6a6a6a" stroke-width="0.4" />
<path d="M756.6 210.4v-4.6h4" fill="none" stroke="#bdbdbd" stroke-width="0.9" />
<path d="M758.2 210.4v-3h2.4" fill="none" stroke="#9a9a9a" stroke-width="0.5" />
<rect x="700" y="209.2" width="6.4" height="5.6" fill="#ffffff" />
<defs><radialGradient id="sp" cx="0.5" cy="0.5" r="0.72"><stop offset="0.4" stop-color="#e82040"/><stop offset="0.75" stop-color="#f27088"/><stop offset="1" stop-color="#fbe0e4"/></radialGradient></defs>
<rect x="704" y="213" width="8" height="8.2" fill="url(#sp)" stroke="#f2d0d6" stroke-width="0.4" />
<rect x="706.2" y="215.2" width="3.6" height="3.8" fill="#333" />
<path d="M703.4 225.8h4.4v5h-4.4" fill="none" stroke="#cfcfcf" stroke-width="0.6" />
<path d="M702.4 226.6h2.4M702.4 228.3h2.4M702.4 230h2.4" fill="none" stroke="#cfcfcf" stroke-width="0.6" />
<path d="M726 222.2l2.6-4l2.6 4z" fill="none" stroke="#cfcfcf" stroke-width="0.6" />
<rect x="755.8" y="216.2" width="5.4" height="7" fill="#555555" stroke="#6e6e6e" stroke-width="0.5" />
<path d="M757.3 219.2h2.4l-1.2 1.4z" fill="#e4e4e4" />
<rect x="726.4" y="228.4" width="3.2" height="4" fill="none" stroke="#cfcfcf" stroke-width="0.6" />
<path d="M725.2 227.4h2M731 233.4h-2" fill="none" stroke="#cfcfcf" stroke-width="0.5" />
<path d="M730.6 229v3" fill="none" stroke="#cfcfcf" stroke-width="0.5" />
<rect x="755.8" y="227.2" width="5.4" height="7" fill="#555555" stroke="#6e6e6e" stroke-width="0.5" />
<path d="M757.3 230.2h2.4l-1.2 1.4z" fill="#e4e4e4" />
<path d="M726 236.8l1 1.2l-1 1.2l-1-1.2z" fill="#cfcfcf" />
<path d="M766.4 236.8l1 1.2l-1 1.2l-1-1.2z" fill="#cfcfcf" />
<path d="M702 248.2l2.2 2v4h-4.4v-4z" fill="#c8c8c8" stroke="#333" stroke-width="0.3" />
<rect x="700.5" y="250.8" width="3" height="2.8" fill="#e01838" stroke="#555" stroke-width="0.3" />
<path d="M750 248.2l2.2 2v4h-4.4v-4z" fill="#c8c8c8" stroke="#333" stroke-width="0.3" />
<rect x="748.5" y="250.8" width="3" height="2.8" fill="#e01838" stroke="#555" stroke-width="0.3" />
<path d="M783 248.2l2.2 2v4h-4.4v-4z" fill="#c8c8c8" stroke="#333" stroke-width="0.3" />
<rect x="781.5" y="250.8" width="3" height="2.8" fill="#f4f4f4" stroke="#555" stroke-width="0.3" />
<rect x="788" y="243.6" width="4" height="4.6" fill="none" stroke="#5c5c5c" stroke-width="0.6" rx="0.5"/>
<path d="M787.2 243h5.6" fill="none" stroke="#5c5c5c" stroke-width="0.7" />
<rect x="755.8" y="260" width="5.4" height="7" fill="#505050" stroke="#606060" stroke-width="0.4" />
<path d="M757.4 263.05h2.2l-1.1 1.3z" fill="#7a7a7a" />
<rect x="755.8" y="270.8" width="5.4" height="7" fill="#505050" stroke="#606060" stroke-width="0.4" />
<path d="M757.4 273.85h2.2l-1.1 1.3z" fill="#7a7a7a" />
<path d="M796 276.8l-2.2 2.2h2.2z" fill="#333" />
<path d="M712.4 283.4v7M741 283.4v7" fill="none" stroke="#2e2e2e" stroke-width="0.5" />
<path d="M789.6 286.6h2l-1 1.2z" fill="#c8c8c8" />
<path d="M792.4 286.0h3.2M792.4 287.2h3.2M792.4 288.4h3.2" fill="none" stroke="#c8c8c8" stroke-width="0.5" />
<rect x="699.4" y="292" width="96.6" height="47" fill="none" stroke="#5a5a5a" stroke-width="0.5" />
<rect x="700.8" y="294" width="7.4" height="7.6" fill="#ffffff" />
<path d="M699.4 303.4h96.6M699.4 313.6h96.6M699.4 323.8h96.6M699.4 334h96.6" fill="none" stroke="#3c3c3c" stroke-width="0.5" />
<path d="M709.4 303.4v30.6" fill="none" stroke="#3c3c3c" stroke-width="0.5" />
<path d="M701.6 308.6q2.6-2.6 5.2 0q-2.6 2.6-5.2 0z" fill="none" stroke="#cfcfcf" stroke-width="0.5" />
<circle cx="704.2" cy="308.6" r="0.8" fill="#cfcfcf" />
<path d="M701.6 318.8q2.6-2.6 5.2 0q-2.6 2.6-5.2 0z" fill="none" stroke="#cfcfcf" stroke-width="0.5" />
<circle cx="704.2" cy="318.8" r="0.8" fill="#cfcfcf" />
<path d="M701.6 329q2.6-2.6 5.2 0q-2.6 2.6-5.2 0z" fill="none" stroke="#5a5a5a" stroke-width="0.5" />
<circle cx="704.2" cy="329" r="0.8" fill="#5a5a5a" />
<path d="M712.3 307.3v2.6l1.8 -1.3z" fill="#e8e8e8" />
<path d="M712.3 317.5v2.6l1.8 -1.3z" fill="#e8e8e8" />
<rect x="737.2" y="304.4" width="7.2" height="8" fill="#f4f4f4" stroke="#999" stroke-width="0.4" />
<circle cx="740.8" cy="308.4" r="1.7" fill="#e01030" />
<rect x="737.2" y="314.6" width="7.2" height="8" fill="#f4f4f4" stroke="#999" stroke-width="0.4" />
<path d="M738 321.6l5.6-6" fill="none" stroke="#e02020" stroke-width="0.9" />
<rect x="702.2" y="341.6" width="3.6" height="3.8" fill="none" stroke="#e8e8e8" stroke-width="0.8" />
<rect x="713.2" y="341.6" width="3.6" height="3.8" fill="#9a9a9a" stroke="#6a6a6a" stroke-width="0.5" />
<circle cx="761.6" cy="343.6" r="2.1" fill="none" stroke="#cfcfcf" stroke-width="0.6" />
<path d="M760.2 345l2.8-2.8" fill="none" stroke="#cfcfcf" stroke-width="0.6" />
<rect x="771.4" y="341.6" width="3.6" height="4" fill="#5a5a5a" />
<rect x="781.8" y="342" width="3.6" height="4" fill="#565656" />
<path d="M796 344.4l-2.2 2.2h2.2z" fill="#333" />
<path d="M712.4 350v7.2M729.6 350v7.2" fill="none" stroke="#2e2e2e" stroke-width="0.5" />
<path d="M789.6 353.4h2l-1 1.2z" fill="#c8c8c8" />
<path d="M792.4 352.8h3.2M792.4 354h3.2M792.4 355.2h3.2" fill="none" stroke="#c8c8c8" stroke-width="0.5" />
<rect x="699.4" y="359.2" width="96.6" height="75.6" fill="none" stroke="#5a5a5a" stroke-width="0.5" />
<path d="M708.4 359.6v18M717 359.6v18M780.6 359.6v18" fill="none" stroke="#3e3e3e" stroke-width="0.5" />
<path d="M699.6 368.5h96.2M699.6 377.7h96.2" fill="none" stroke="#3e3e3e" stroke-width="0.4" />
<rect x="717.4" y="368.8" width="1.6" height="8.6" fill="#5c82e8" />
<rect x="717.4" y="359.8" width="1.6" height="8.4" fill="#45526e" />
<path d="M721.3 363.2h2.6l-1.3 1.8z" fill="#f0f0f0" />
<rect x="729" y="360.6" width="6.6" height="6.8" fill="#fff6f6" stroke="#d8c0c0" stroke-width="0.3" />
<rect x="789.2" y="362" width="3.8" height="3.8" fill="#3f6fe8" stroke="#dfe6ff" stroke-width="0.5" />
<path d="M793.4 359.8h2.2v2.2z" fill="#e8e8e8" />
<path d="M701.4 373.1q2.6-2.6 5.2 0q-2.6 2.6-5.2 0z" fill="none" stroke="#e0e0e0" stroke-width="0.5" />
<circle cx="704" cy="373.1" r="0.8" fill="#e0e0e0" />
<rect x="737" y="369.7" width="6.6" height="6.6" fill="#fff6f6" stroke="#d8c0c0" stroke-width="0.3" />
<circle cx="785" cy="373.1" r="1.9" fill="none" stroke="#d8d8d8" stroke-width="0.6" />
<circle cx="785" cy="373.1" r="0.8" fill="#6a8a6a" />
<rect x="789.2" y="371.2" width="3.8" height="3.8" fill="#3f6fe8" stroke="#dfe6ff" stroke-width="0.5" />
<circle cx="741.6" cy="438.8" r="1.6" fill="none" stroke="#6a6a6a" stroke-width="0.6" />
<path d="M740.4 440l-1.4 1.6" fill="none" stroke="#6a6a6a" stroke-width="0.7" />
<rect x="749.4" y="437.6" width="3.4" height="3.6" fill="none" stroke="#6a6a6a" stroke-width="0.6" />
<circle cx="752.4" cy="440.6" r="1.2" fill="#6a6a6a" />
<path d="M760 438h2.4v3.6" fill="none" stroke="#6a6a6a" stroke-width="0.6" />
<rect x="762.6" y="438.4" width="2.8" height="3.4" fill="#6a6a6a" />
<rect x="771.6" y="438" width="4.2" height="4" fill="#6a6a6a" />
<rect x="782" y="438.4" width="3.4" height="3.8" fill="#585858" />
<path d="M781.4 437.8h4.6" fill="none" stroke="#585858" stroke-width="0.6" />
<path d="M690.7 42.6h3.4l-1.7 -2.4z" fill="#e6e6e6" />
<path d="M690.7 431.6h3.4l-1.7 2.4z" fill="#e6e6e6" />
<path d="M684.6 439.4v3l2 -1.5z" fill="#e8e8e8" />
<defs><linearGradient id="ara" gradientUnits="userSpaceOnUse" x1="101.5" y1="209.2" x2="27.3" y2="210.8"><stop offset="0" stop-color="#f04a4a" stop-opacity="0.45"/><stop offset="0.25" stop-color="#ec3a3a" stop-opacity="0.85"/><stop offset="1" stop-color="#e6242a"/></linearGradient></defs>
<path d="M101.5 209.2L32.86 208.88L34.23 207.45L27.3 210.8L34.37 213.85L32.94 212.48z" fill="url(#ara)"/>
<defs><linearGradient id="arb" gradientUnits="userSpaceOnUse" x1="416.5" y1="130.6" x2="338.4" y2="133.3"><stop offset="0" stop-color="#f04a4a" stop-opacity="0.45"/><stop offset="0.25" stop-color="#ec3a3a" stop-opacity="0.85"/><stop offset="1" stop-color="#e6242a"/></linearGradient></defs>
<path d="M416.5 130.6L344.74 131.33L346.28 129.63L338.4 133.3L346.51 136.42L344.86 134.83z" fill="url(#arb)"/>
<defs><linearGradient id="arc" gradientUnits="userSpaceOnUse" x1="661.5" y1="231.4" x2="736" y2="198.4"><stop offset="0" stop-color="#f04a4a" stop-opacity="0.45"/><stop offset="0.25" stop-color="#ec3a3a" stop-opacity="0.85"/><stop offset="1" stop-color="#e6242a"/></linearGradient></defs>
<path d="M661.5 231.4L730.55 202.89L729.73 205.23L736 198.4L726.73 198.46L729.01 199.42z" fill="url(#arc)"/>
<path d="M799.6 180.9H693.3V282.3H799.6" fill="none" stroke="#9a3a34" stroke-width="0.9"/>
<rect x="797.6" y="10" width="2.4" height="436" fill="#333333"/>
<path d="M799.4 180.9v101.4" fill="none" stroke="#8a3832" stroke-width="0.8"/>
</svg>
</div></body></html>
